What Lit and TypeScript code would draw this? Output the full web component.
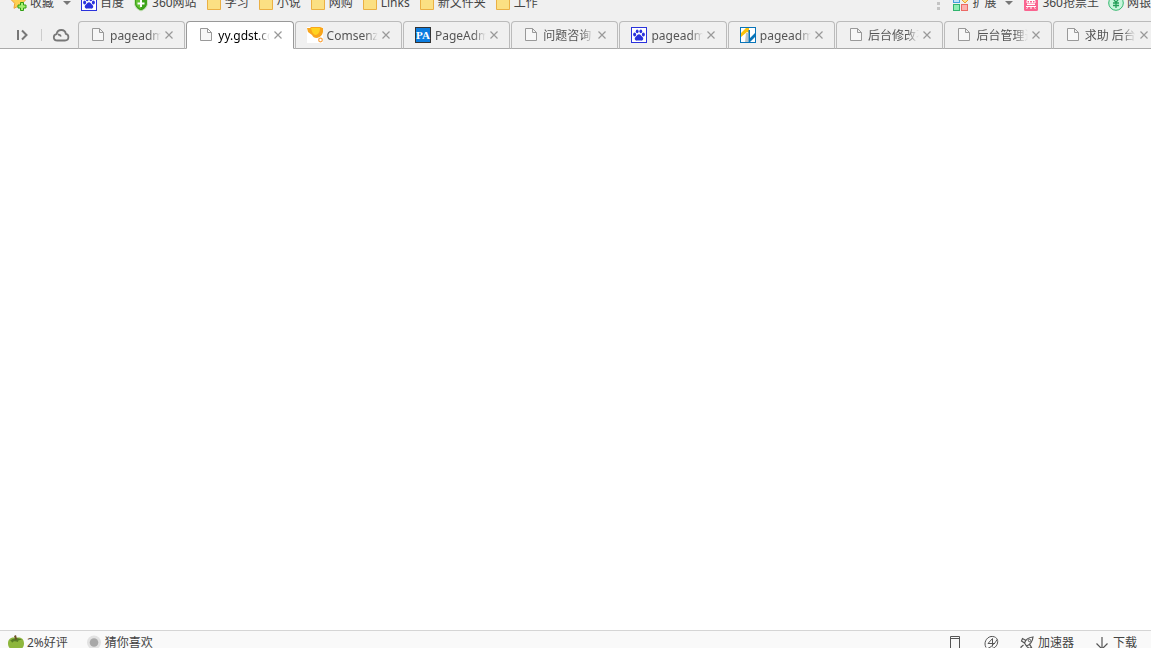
import { LitElement, html, css, svg } from "lit";
import { customElement, property } from "lit/decorators.js";

const paw = (c: string) => svg`<g fill=${c}>
  <ellipse cx="3.6" cy="7.4" rx="1.5" ry="2"/><ellipse cx="6.2" cy="4.3" rx="1.4" ry="1.9"/>
  <ellipse cx="9.8" cy="4.3" rx="1.4" ry="1.9"/><ellipse cx="12.4" cy="7.4" rx="1.5" ry="2"/>
  <path d="M8 7.2c1.4 0 2 1.4 3 2.4 1.2 1.1 1.4 1.8 1.200 2.700-.3 1.200-1.500 1.500-2.500 1.300-1.200-.2-2.200-.2-3.400 0-1 .2-2.200-.1-2.500-1.300-.2-.9 0-1.600 1.200-2.700 1-1 1.600-2.400 3-2.400z"/></g>`;

const icons: Record<string, unknown> = {
  star: svg`<path d="M7.500-.5l2.300 4.400 5 .8-3.500 3.600.7 5L7.500 11l-4.500 2.300.7-5L.2 4.700l5-.8z" fill="#fed053" stroke="#f0a136"/>
    <path d="M9.500 7.500h3v2.500h2.500v3h-2.500v2.500h-3V13H7v-3h2.500z" fill="#a5ee72" stroke="#2f9e13"/>`,
  baidu: svg`<rect x=".5" y=".5" width="15" height="15" fill="#fff" stroke="#2a32dc"/>${paw("#2a32dc")}`,
  shield: svg`<path d="M8 0l6.500 2v6c0 4-3 6.500-6.500 8-3.500-1.500-6.500-4-6.500-8V2z" fill="#3da319" stroke="#d0e5c5"/>
    <path d="M3 3l5-1.500V14C5 12.500 3 11 3 8z" fill="#64c235"/><path d="M7 5h2v2.500h2.500v2H9V12H7V9.500H4.500v-2H7z" fill="#fff"/>`,
  folder: svg`<path d="M1.500 1.500h5l1 2h7v11h-13z" fill="#fbe083" stroke="#ebb044"/>`,
  apps: svg`<rect x=".5" y=".5" width="6" height="7" fill="#c2e3fa" stroke="#429fdc"/>
    <rect x=".5" y="9.500" width="6" height="6" fill="#8eedb4" stroke="#31b46e"/>
    <rect x="8.500" y="9.500" width="6" height="6" fill="#fbb1ae" stroke="#ec6965"/>
    <path d="M12 1l3.500 3.500L12 8 8.500 4.500z" fill="#ffe08b" stroke="#eaa12e"/>`,
  ticket: svg`<rect x="1" y="1" width="14" height="15" rx="1.500" fill="#fa6490"/>
    <path d="M3 3.500h10M4 5.500h8v2.500H4zM6.500 3.500V8M9.500 3.500V8M4 9.500h8M3 11.500h10M8 11.500V14M5 12.500l-1.500 1M11 12.500l1.500 1" fill="none" stroke="#fff"/>`,
  yuan: svg`<circle cx="8" cy="8" r="7.300" fill="#c8f5dc" stroke="#35b96f"/>
    <path d="M5 3.500l3 4 3-4M8 7.500V13M5 8h6M5 10.500h6" fill="none" stroke="#249f58" stroke-width="1.300"/>`,
  page: svg`<path d="M2.500 1.500h7l4 4v8h-11zM9.500 1.500v4h4" fill="#f7f7f7" stroke="#999"/>`,
  trophy: svg`<rect width="16" height="16" fill="#fff"/><path d="M0 1l3 0 1-1h9l3 1v4c-.5 3-3 5.500-6 6-3 0-4-1-5-3L1 5z" fill="#f9a51c"/>
    <path d="M4 1h9c0 3-1 6-4 7-3 0-4-3-5-7z" fill="#ffd21f"/><circle cx="13.500" cy="13" r="1.800" fill="#fff" stroke="#f9a13a" stroke-width="1.200"/>`,
  pa: svg`<rect x=".5" y=".5" width="15" height="15" fill="#0c7de0" stroke="#333"/>
    <text x="8" y="12" text-anchor="middle" class="pa">PA</text>`,
  stripe: svg`<rect x=".5" y=".5" width="15" height="15" fill="#fff" stroke="#0874b9"/>
    <path d="M6 6h2.500v9H5z" fill="#b9c6ca"/><path d="M1 6l5-5h3v5L7 5 1 10z" fill="#fac20c"/>
    <path d="M8.500 3H10v8l5-5v4l-5 5H8.500z" fill="#0874b9"/>`,
  panel: svg`<path d="M4 3v10M8 3.500l4.500 4.500L8 12.500" fill="none" stroke="#777" stroke-width="2"/>`,
  cloud: svg`<path d="M4.500 13.500C2 13.500.8 12 .8 10.200.8 8.500 2 7.300 3.600 7.100 4 4.500 6 3 8.300 3c2.400 0 4.200 1.600 4.500 3.800 1.600.3 2.600 1.500 2.600 3.200 0 2-1.300 3.500-3.400 3.500zM5 7.500c1.500 0 2.500.7 3 2" fill="none" stroke="#777" stroke-width="1.800"/>`,
  fruit: svg`<path d="M8 3c5-1.500 8 1 8 5.500 0 5-4 7-8 7s-8-2-8-7C0 4.500 3 1.500 8 3z" fill="#8db63c"/>
    <path d="M2 6c2-3 8-4 12-1-3 0-4 0-4 2-3-1.500-5-1-6 1 0-1.500-1-2-2-2z" fill="#587d25"/><path d="M7.500 5L6 1l2-1 1 4z" fill="#6c5026"/>`,
  dot: svg`<circle cx="8" cy="7.500" r="7" fill="#e2e2e2"/><circle cx="8" cy="7.500" r="4.300" fill="#a8a8a8"/>`,
  device: svg`<path d="M3.500 1.500h9v12h-9zM3.500 3.500h9" fill="none" stroke="#555"/>`,
  flash: svg`<path d="M3 12.500C.5 8 3 2.500 8 1.500c5-.5 7.500 3 6.500 6.500-1 4.500-5 6.500-9 5M2 14.500C6 14 12 9 14 4.500M9.500 3.500L5 8.500h7M9.500 3.500v8" fill="none" stroke="#555"/>`,
  rocket: svg`<path d="M5.500 8C6.500 4.500 9 2.500 14 2c-.5 5-2.500 7.500-6.500 9zM7 5.500L3.500 3.500 2.500 6l3 2M10.500 9l2 3.500-2.500 1L7.500 11M4.500 10L2 12v2l3-.5" fill="none" stroke="#555" stroke-width="1.200"/><circle cx="10.500" cy="5.500" r="1.200" fill="none" stroke="#555"/>`,
  down: svg`<path d="M8 2v12M2.500 8.500L8 14l5.500-5.500" fill="none" stroke="#555" stroke-width="1.200"/>`,
};

@customElement("ui-icon")
class UiIcon extends LitElement {
  @property() name = "";
  static styles = css`
    :host { display: block; flex: none; width: 16px; height: 16px; }
    svg { display: block; width: 100%; height: 100%; overflow: visible; }
    .pa { font: bold 11px "Liberation Serif", serif; fill: #fff; }
  `;
  render() {
    return html`<svg viewBox="0 0 16 16" aria-hidden="true">${icons[this.name]}</svg>`;
  }
}

const bookmarks = [
  ["baidu", "百度"], ["shield", "360网站"], ["folder", "学习"], ["folder", "小说"],
  ["folder", "网购"], ["folder", "Links"], ["folder", "新文件夹"], ["folder", "工作"],
];
const tabs = [
  ["page", "pageadmin"], ["page", "yy.gdst.cc"], ["trophy", "Comsenz"], ["pa", "PageAdmin"],
  ["page", "问题咨询 -"], ["baidu", "pageadmin"], ["stripe", "pageadmin"],
  ["page", "后台修改不"], ["page", "后台管理进"], ["page", "求助 后台管"],
];

@customElement("app-root")
class AppRoot extends LitElement {
  static styles = css`
    :host {
      display: flex; flex-direction: column; height: 100vh; overflow: hidden; background: #fff;
      color: #444; font: 12px/18px "Noto Sans", "Noto Sans CJK SC", sans-serif;
    }
    a { color: inherit; text-decoration: none; }
    button { font: inherit; color: inherit; background: none; border: 0; padding: 0; margin: 0; }
    .bookmarks { display: flex; align-items: flex-end; justify-content: space-between; height: 21px; background: #f0f0f0; overflow: hidden; }
    .group { display: flex; align-items: center; height: 36px; gap: 9px; padding-left: 11px; white-space: nowrap; }
    .group.right { padding: 0; }
    .item { display: flex; align-items: center; gap: 3px; }
    .caret { width: 0; height: 0; border: 4px solid transparent; border-top-color: #777; border-bottom: 0; margin: 0 1px 0 6px; }
    .grip { width: 3px; height: 13px; margin-right: 4px; background: repeating-linear-gradient(#c4c4c4 0 3px, transparent 3px 5px); }
    .strip { display: flex; height: 28px; background: linear-gradient(#aaa, #aaa) bottom / 100% 1px no-repeat #f0f0f0; overflow: hidden; }
    .tools { display: flex; flex: none; align-items: center; width: 78px; box-sizing: border-box; padding: 0 9px 0 14px; justify-content: space-between; }
    .tools button { display: block; }
    .divider { width: 1px; height: 12px; background: #ccc; }
    .tabs { display: flex; flex: 1; gap: 1px; margin-right: -9px; min-width: 0; }
    .tab {
      display: flex; flex: 1 1 0; min-width: 0; align-items: center; box-sizing: border-box; height: 28px;
      padding: 0 10px 0 11px; border: 1px solid #bbb; border-bottom-color: #aaa; border-radius: 4px 4px 0 0; color: #555;
    }
    .tab.active { background: #fff; border-color: #999; border-bottom-color: #fff; color: #000; }
    .title {
      flex: 1; min-width: 0; margin: 0 3px 0 4px; padding-top: 2px; overflow: hidden; white-space: nowrap; text-align: left;
      mask-image: linear-gradient(to right, #000 75%, transparent);
    }
    .close { flex: none; width: 10px; height: 10px; }
    .close svg { display: block; }
    main { flex: 1; }
    footer { display: flex; justify-content: space-between; align-items: flex-start; height: 17px; overflow: hidden; background: #f9f9f9; border-top: 1px solid #d5d5d5; }
    .status { display: flex; align-items: center; height: 24px; gap: 18px; padding: 0 14px 0 8px; white-space: nowrap; }
    .status.right { gap: 20px; }
    .status button { display: flex; align-items: center; gap: 3px; }
  `;

  render() {
    return html`
      <nav class="bookmarks" aria-label="收藏">
        <div class="group">
          <button class="item"><ui-icon name="star"></ui-icon>收藏<span class="caret"></span></button>
          ${bookmarks.map(([icon, text]) => html`<a class="item" href="#"><ui-icon name=${icon}></ui-icon>${text}</a>`)}
        </div>
        <div class="group right">
          <span class="grip"></span>
          <button class="item"><ui-icon name="apps"></ui-icon>扩展<span class="caret"></span></button>
          <button class="item"><ui-icon name="ticket"></ui-icon>360抢票王</button>
          <button class="item"><ui-icon name="yuan"></ui-icon>网银</button>
        </div>
      </nav>
      <div class="strip">
        <div class="tools">
          <button aria-label="侧边栏"><ui-icon name="panel"></ui-icon></button>
          <span class="divider"></span>
          <button aria-label="云"><ui-icon name="cloud"></ui-icon></button>
        </div>
        <div class="tabs">
          ${tabs.map(([icon, text], i) => html`
            <div class="tab ${i === 1 ? "active" : ""}">
              <ui-icon name=${icon}></ui-icon>
              <button class="title">${text}</button>
              <button class="close" aria-label="关闭">
                <svg width="10" height="10" viewBox="0 0 10 10"><path d="M1.500 1.500l7 7M8.500 1.500l-7 7" stroke="#999" stroke-width="1.200"/></svg>
              </button>
            </div>`)}
        </div>
      </div>
      <main></main>
      <footer>
        <div class="status">
          <button><ui-icon name="fruit"></ui-icon>2%好评</button>
          <button><ui-icon name="dot"></ui-icon>猜你喜欢</button>
        </div>
        <div class="status right">
          <button aria-label="手机"><ui-icon name="device"></ui-icon></button>
          <button aria-label="极速模式"><ui-icon name="flash"></ui-icon></button>
          <button><ui-icon name="rocket"></ui-icon>加速器</button>
          <button><ui-icon name="down"></ui-icon>下载</button>
        </div>
      </footer>`;
  }
}
